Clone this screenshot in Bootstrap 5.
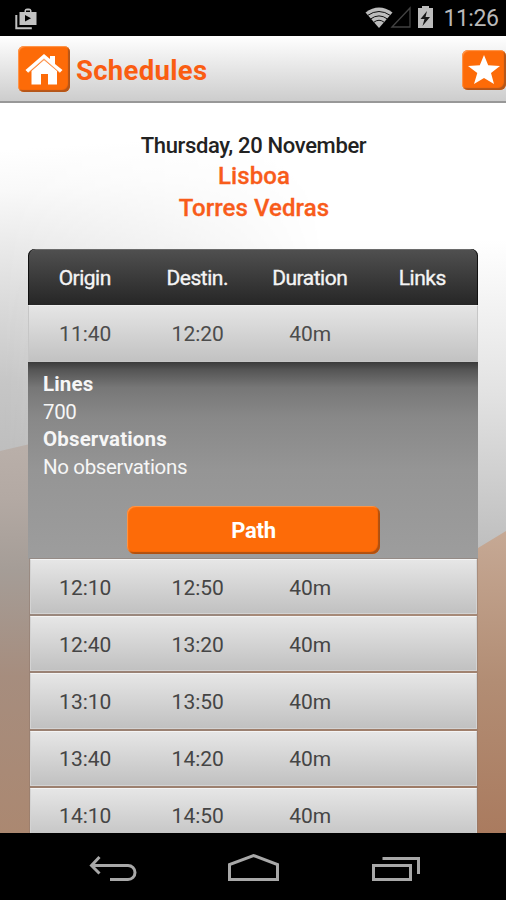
<!DOCTYPE html>
<html lang="en">
<head>
<meta charset="utf-8">
<meta name="viewport" content="width=device-width, initial-scale=1">
<title>Schedules</title>
<link href="https://cdn.jsdelivr.net/npm/bootstrap@5.3.0/dist/css/bootstrap.min.css" rel="stylesheet">
<style>
body{font-family:Roboto,"Liberation Sans",sans-serif;font-size:21px;line-height:28px;height:900px;background:#000}
.status-bar{height:36px;padding:0 8px 0 15px;color:#c4c4c4}
.clock{font-size:23px;line-height:36px;color:#b9b9b9;letter-spacing:-.45px;margin-right:-.45px;padding-top:1px}
.app-bar{height:67px;padding:0 0 0 18px;background:linear-gradient(#fff,#cdcdcd);border-bottom:2px solid #989898}
.app-title{font-size:27.500px;font-weight:700;color:#fa5d12;margin:4px 0 0 6px;line-height:36px;letter-spacing:.3px}
.icon-btn{background:#fd6b08;border-radius:6px;box-shadow:inset 1px 1px 1px #ff9a50,inset -2px -2px 1px #b4561a}
.home-btn{width:52px;height:46px}
.star-btn{width:44px;height:40px;margin-top:3px}
.scene{min-height:0;position:relative}
.backdrop{position:absolute;inset:0;width:100%;height:100%}
.page{position:relative;padding:28px 28px 0}
.trip-date{font-size:22px;font-weight:500;color:#222;line-height:30px;letter-spacing:-.35px;padding-left:1px}
.trip-stop{font-size:24px;font-weight:500;color:#f85c1b;line-height:32px;-webkit-text-stroke:.3px #f85c1b;padding-left:2px;position:relative;top:-1px;letter-spacing:.08px}
.timetable{margin-top:24px;width:450px}
.cells>div{flex:0 0 112.5px;text-align:center}
.head-row{height:56px;background:linear-gradient(#505050,#262626);border-radius:7px 7px 0 0;color:#f4f4f4;box-shadow:inset 1px 0 #111,inset -1px 0 #111,inset 0 1px #6b6b6b;-webkit-text-stroke:.35px #f4f4f4;letter-spacing:-.5px;padding:2px 0 0 .5px}
.open-row{height:57px;background:linear-gradient(#e5e5e5,#c2c2c2);border:1px solid #c6c6c6;border-top-color:#eee;color:#4c4c4c;padding-top:1px}
.time-row{height:55.2px;margin:0 1px 2px 2px;background:linear-gradient(#e6e6e6,#c1c1c1);border:1px solid #d3d3d3;border-top-color:#f4f4f4;color:#454545;box-shadow:0 0 0 1px #8b746870;padding-top:2px}
.time-row.cells>div:first-child{margin-left:-2px}
.detail{height:197px;padding:9px 15px 0;background:linear-gradient(#3b3b3b,#555 4%,#777 13%,#888 28%,#959595 55%,#9d9d9d);color:#f6f6f6;font-size:20.5px;line-height:27.7px;letter-spacing:-.35px}
.detail .fw-bold{letter-spacing:.15px}
.path-btn{width:253px;height:48px;margin:24px 0 0 84px;font-size:22px;font-weight:700;border-radius:8px;background:#fd6b08;color:#fff;letter-spacing:-.3px;padding-top:2px!important;box-shadow:inset 1px 1px 1px #ff984a,inset -2px -2px 1px #af5010}
.nav-keys{height:67px}
</style>
</head>
<body class="d-flex flex-column overflow-hidden">
<header class="status-bar d-flex align-items-center flex-shrink-0">
  <svg width="24" height="24" viewBox="0 0 24 24" fill="none"><path d="M1.300 9v13.200h15.500" stroke="#c2c2c2" stroke-width="2"/><path fill="#c2c2c2" fill-rule="evenodd" d="M4.500 6h5V4.500Q10 2.500 12 2.500h2Q16 2.500 16.500 4.500V6h5v13h-17zM11 6h4V4.500h-4zM10 9v6.500l6-3.300z"/></svg>
  <svg class="ms-auto" width="74" height="28" viewBox="366 4 74 28"><path d="M366.500 12.500Q380 2.500 393.500 12.500L380 28z" fill="#bdbdbd"/><path d="M368.500 15.500Q380 7.500 391.500 15.500M371.500 19Q380 12.800 388.500 19M374.500 22.500Q380 18 385.500 22.500" fill="none" stroke="#101010" stroke-width="1"/><path d="M393 27L411 8v19z" fill="none" stroke="#424242" stroke-width="1.300"/><path fill="#bdbdbd" d="M419 8h4V6h7v2h4v20h-15z"/><path d="M428 11l-6.500 8h4l-2 7 7.500-9h-4.500z" fill="#161616"/></svg>
  <span class="clock ms-1">11:26</span>
</header>
<div class="app-bar d-flex align-items-center flex-shrink-0">
  <button class="btn p-0 border-0 icon-btn home-btn d-flex align-items-center justify-content-center" aria-label="Home"><svg width="38" height="34" viewBox="0 0 38 34"><path fill="#fff" d="M6.500 19L19 8l13 11v13.500h-9V22h-7v10.500H6.500z"/><path d="M3 20.500L19 6.800l16 13.700" fill="none" stroke="#fda66c" stroke-width="1.200"/><path fill="#fff" d="M.5 18L19 2l6 5V4h5v8l7.500 6-2.500 2.500L19 6.500 3 20.500z"/></svg></button>
  <h1 class="app-title">Schedules</h1>
  <button class="btn p-0 border-0 icon-btn star-btn ms-auto d-flex align-items-center justify-content-center" aria-label="Favourite"><svg width="32" height="32" viewBox="0 0 32 32"><path fill="#fff" d="M16 1l4.200 10.300L32 12l-9 7 3 11-10-6-10 6 3.300-11L0 12l11.800-.7z"/></svg></button>
</div>
<main class="scene flex-grow-1 overflow-hidden">
  <svg class="backdrop" viewBox="0 103 506 730" preserveAspectRatio="none">
    <defs>
      <linearGradient id="skyLeft" x1="0" y1="150" x2="20" y2="460" gradientUnits="userSpaceOnUse"><stop offset="0" stop-color="#fff"/><stop offset=".13" stop-color="#f9f9f9"/><stop offset=".45" stop-color="#dedede"/><stop offset=".75" stop-color="#c6c6c6"/><stop offset="1" stop-color="#bdbdbd"/></linearGradient>
      <linearGradient id="skyRight" x1="0" y1="240" x2="0" y2="550" gradientUnits="userSpaceOnUse"><stop offset="0" stop-color="#fff"/><stop offset=".5" stop-color="#e2e2e2"/><stop offset="1" stop-color="#bebebe"/></linearGradient>
      <linearGradient id="fade"><stop offset="0" stop-color="#fff" stop-opacity="0"/><stop offset=".65" stop-color="#fff"/></linearGradient>
      <mask id="rightSide"><path fill="url(#fade)" d="M0 103h506v730H0z"/></mask>
      <linearGradient id="landLeft" x1="0" y1="440" x2="0" y2="833" gradientUnits="userSpaceOnUse"><stop offset="0" stop-color="#bab0aa"/><stop offset=".15" stop-color="#b3a9a3"/><stop offset=".33" stop-color="#a59d97"/><stop offset=".6" stop-color="#a68d7e"/><stop offset="1" stop-color="#ab8871"/></linearGradient>
      <linearGradient id="landRight" x1="0" y1="530" x2="0" y2="833" gradientUnits="userSpaceOnUse"><stop offset="0" stop-color="#c6a995"/><stop offset=".5" stop-color="#b28d74"/><stop offset="1" stop-color="#aa7b5f"/></linearGradient>
    </defs>
    <path fill="url(#skyLeft)" d="M0 103h506v730H0z"/>
    <path fill="url(#skyRight)" mask="url(#rightSide)" d="M0 103h506v730H0z"/>
    <path fill="url(#landLeft)" d="M0 451l30-7h220v389H0z"/>
    <path fill="url(#landRight)" d="M250 560l228-12 28-17v302H250z"/>
  </svg>
  <div class="page">
    <div class="text-center">
      <div class="trip-date">Thursday, 20 November</div>
      <div class="trip-stop">Lisboa</div>
      <div class="trip-stop">Torres Vedras</div>
    </div>
    <section class="timetable">
      <div class="head-row cells d-flex align-items-center"><div>Origin</div><div>Destin.</div><div>Duration</div><div>Links</div></div>
      <div class="open-row cells d-flex align-items-center"><div>11:40</div><div>12:20</div><div>40m</div></div>
      <div class="detail">
        <div class="fw-bold">Lines</div><div>700</div>
        <div class="fw-bold">Observations</div><div>No observations</div>
        <button class="btn p-0 border-0 path-btn">Path</button>
      </div>
      <div class="time-row cells d-flex align-items-center"><div>12:10</div><div>12:50</div><div>40m</div></div>
      <div class="time-row cells d-flex align-items-center"><div>12:40</div><div>13:20</div><div>40m</div></div>
      <div class="time-row cells d-flex align-items-center"><div>13:10</div><div>13:50</div><div>40m</div></div>
      <div class="time-row cells d-flex align-items-center"><div>13:40</div><div>14:20</div><div>40m</div></div>
      <div class="time-row cells d-flex align-items-center"><div>14:10</div><div>14:50</div><div>40m</div></div>
    </section>
  </div>
</main>
<footer class="nav-keys bg-black flex-shrink-0">
  <svg class="d-block" width="506" height="67" viewBox="0 833 506 67" fill="none" stroke="#a8a8a8" stroke-width="3"><path d="M99.500 857L91.500 865.500L99.500 873.500M91.500 865.500H128a7 7 0 0 1 0 14H110"/><path d="M229.500 879.500V864.500L253.500 855.500L277.500 864.500V879.500Z"/><path d="M373.500 865.500h37v14h-37zM382.500 858.500h36V874"/></svg>
</footer>
<script src="https://cdn.jsdelivr.net/npm/bootstrap@5.3.0/dist/js/bootstrap.bundle.min.js"></script>
</body>
</html>
